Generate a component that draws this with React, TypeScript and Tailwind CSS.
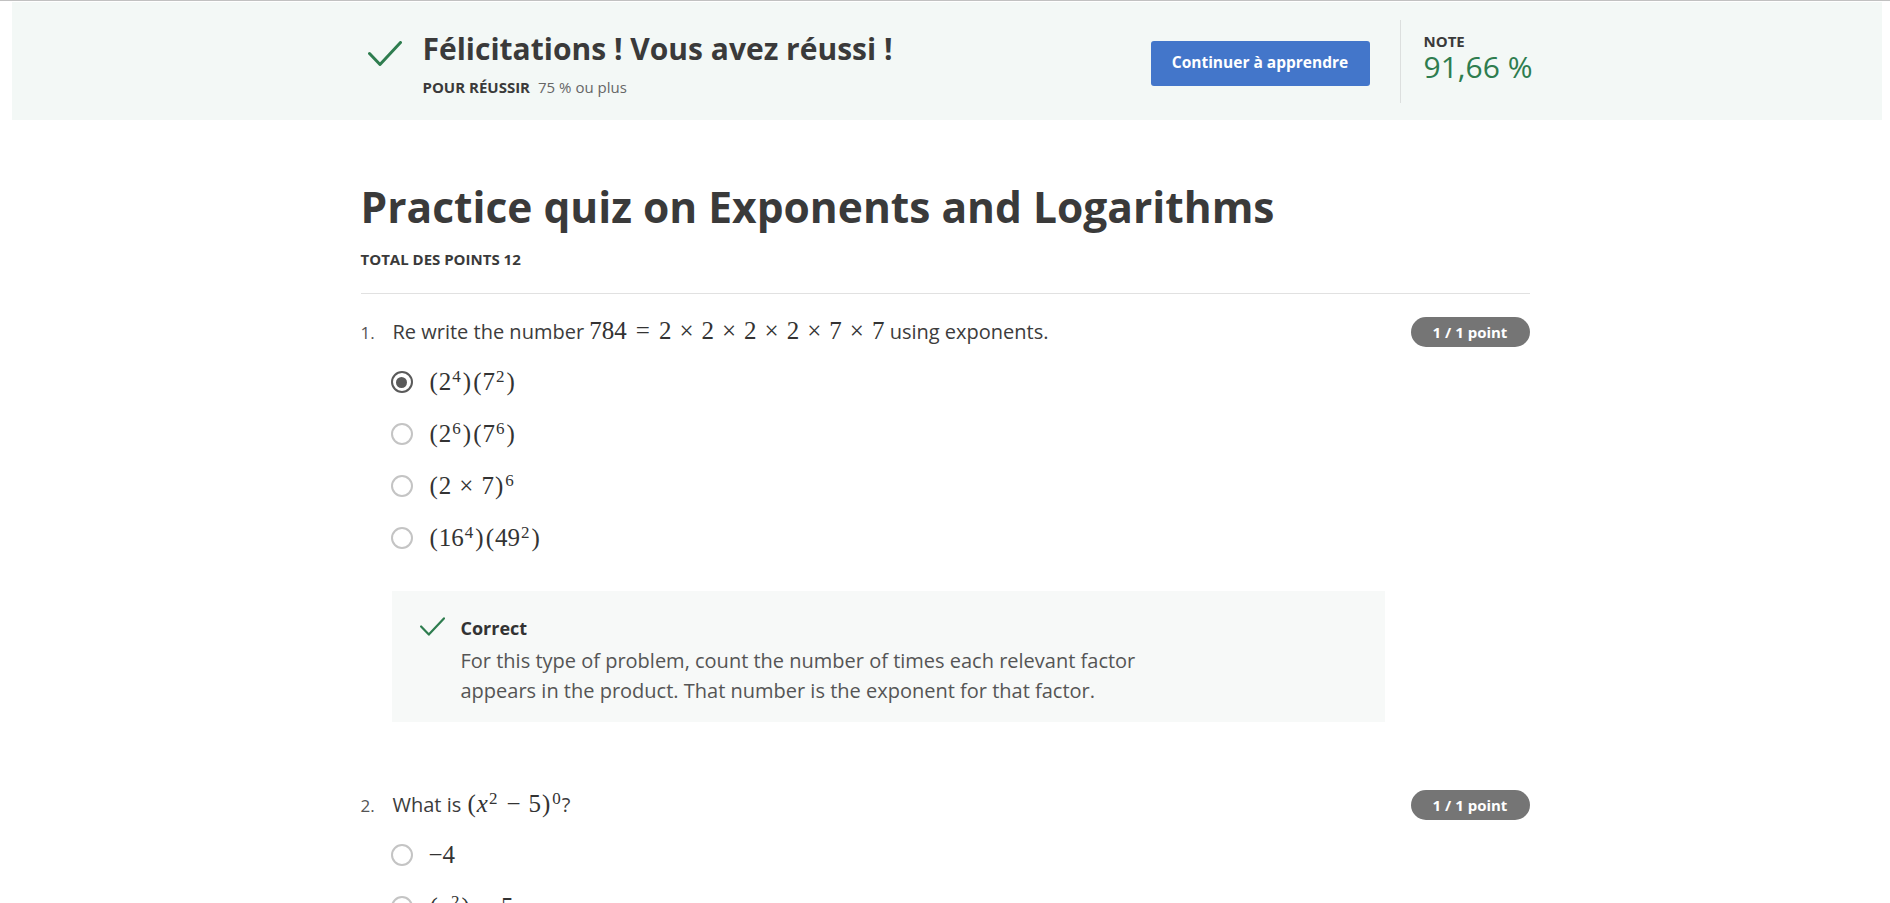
import React from 'react';

function Check({ className }: { className?: string }) {
  return (
    <svg viewBox="0 0 34 25" className={className} fill="none">
      <path d="M1.5 12.5 L12 23.5 L32.5 1.5" stroke="currentColor" strokeWidth="3" strokeLinecap="round" strokeLinejoin="round" />
    </svg>
  );
}

function Radio({ checked }: { checked?: boolean }) {
  if (checked) {
    return (
      <span className="w-[22px] h-[22px] shrink-0 rounded-full border-[2.5px] border-[#5a5a5a] flex items-center justify-center">
        <span className="w-[11px] h-[11px] rounded-full bg-[#5a5a5a]" />
      </span>
    );
  }
  return <span className="w-[22px] h-[22px] shrink-0 rounded-full border-[2.5px] border-[#c4c4c4]" />;
}

// math bits (KaTeX look-alike)
const M = ({ children }: { children: React.ReactNode }) => (
  <span className="font-['Liberation_Serif',serif] text-[25px] leading-none text-[#333] whitespace-nowrap">{children}</span>
);
const Sup = ({ children }: { children: React.ReactNode }) => (
  <span className="text-[17px] align-[8px] ml-[1px] mr-[1px]">{children}</span>
);
const P = ({ children }: { children: React.ReactNode }) => <span className="mx-[1px]">{children}</span>;
const Op = ({ children, wide }: { children: React.ReactNode; wide?: boolean }) => (
  <span className={wide ? 'mx-[9px]' : 'mx-[8px]'}>{children}</span>
);
const X = () => <span className="italic">x</span>;

interface Question {
  num: number;
  text: React.ReactNode;
  options: React.ReactNode[];
  selected: number;
  feedback?: string;
}

const QUESTIONS: Question[] = [
  {
    num: 1,
    text: (
      <>
        Re write the number{' '}
        <M>
          784<Op wide>=</Op>2<Op>×</Op>2<Op>×</Op>2<Op>×</Op>2<Op>×</Op>7<Op>×</Op>7
        </M>{' '}
        using exponents.
      </>
    ),
    options: [
      <M><P>(</P>2<Sup>4</Sup><P>)</P><P>(</P>7<Sup>2</Sup><P>)</P></M>,
      <M><P>(</P>2<Sup>6</Sup><P>)</P><P>(</P>7<Sup>6</Sup><P>)</P></M>,
      <M><P>(</P>2<Op>×</Op>7<P>)</P><Sup>6</Sup></M>,
      <M><P>(</P>16<Sup>4</Sup><P>)</P><P>(</P>49<Sup>2</Sup><P>)</P></M>,
    ],
    selected: 0,
    feedback:
      'For this type of problem, count the number of times each relevant factor appears in the product. That number is the exponent for that factor.',
  },
  {
    num: 2,
    text: (
      <>
        What is{' '}
        <M>
          <P>(</P><X /><Sup>2</Sup><Op>−</Op>5<P>)</P><Sup>0</Sup>
        </M>
        ?
      </>
    ),
    options: [
      <M>−4</M>,
      <M><P>(</P><X /><Sup>2</Sup><P>)</P><Op>−</Op>5</M>,
      <M>1</M>,
    ],
    selected: -1,
  },
];

function QuestionBlock({ q }: { q: Question }) {
  return (
    <div>
      <div className="h-[30px] flex items-center justify-between">
        <div className="flex items-baseline">
          <span className="w-[32px] text-[17px] text-[#555]">{q.num}.</span>
          <span className="text-[20px] text-[#3c3c3c]">{q.text}</span>
        </div>
        <span className="w-[119px] h-[30px] rounded-full bg-[#757575] text-white text-[15px] font-bold flex items-center justify-center">
          1 / 1 point
        </span>
      </div>

      <div className="mt-[9px]">
        {q.options.map((opt, i) => (
          <div key={i} className="h-[52px] flex items-center pl-[30px]">
            <Radio checked={i === q.selected} />
            <span className="ml-[16px]">{opt}</span>
          </div>
        ))}
      </div>

      {q.feedback && (
        <div className="mt-[27px] ml-[31px] w-[993px] bg-[#f7f9f8] pt-[24px] pb-[16px] pl-[28px] flex">
          <Check className="w-[25px] h-[19px] mt-[2px] text-[#2e7d4f] shrink-0" />
          <div className="ml-[16px]">
            <div className="text-[18px] leading-[26px] font-bold text-[#333]">Correct</div>
            <p className="mt-[5px] max-w-[700px] text-[20px] leading-[30px] text-[#555]">{q.feedback}</p>
          </div>
        </div>
      )}
    </div>
  );
}

export default function App() {
  return (
    <div className="min-h-screen bg-white font-['Open_Sans',sans-serif] text-[#3c3c3c] border-t border-[#c1c1c1]">
      {/* Result banner */}
      <div className="mt-px ml-3 mr-2 h-[118px] bg-[#f3f8f6]">
        <div className="w-[1169px] mx-auto h-full flex items-center justify-between">
          <div className="flex items-start mt-[5px]">
            <Check className="w-[34px] h-[25px] ml-[5px] mt-[10px] text-[#2e7d4f]" />
            <div className="ml-[21px]">
              <h2 className="text-[30px] leading-[36px] font-bold text-[#3a3a3a]">Félicitations ! Vous avez réussi !</h2>
              <div className="mt-[10px] text-[15px] leading-[20px]">
                <span className="font-bold text-[#3a3a3a]">POUR RÉUSSIR</span>
                <span className="ml-2 text-[#666]">75 % ou plus</span>
              </div>
            </div>
          </div>
          <div className="flex items-center">
            <button className="mt-[4px] w-[219px] h-[45px] rounded-[3px] bg-[#4376ca] text-white font-bold text-[15.5px]">
              Continuer à apprendre
            </button>
            <div className="ml-[30px] w-px h-[83px] bg-[#dcdfde]" />
            <div className="pl-[23px] w-[131px] -mt-[7px] whitespace-nowrap">
              <div className="text-[15px] leading-[18px] font-bold text-[#3a3a3a]">NOTE</div>
              <div className="text-[30px] leading-[34px] text-[#2e7d4f]">91,66 %</div>
            </div>
          </div>
        </div>
      </div>

      {/* Quiz */}
      <main className="w-[1169px] mx-auto">
        <h1 className="mt-[61px] text-[42.5px] leading-[52px] font-bold text-[#3a3a3a]">
          Practice quiz on Exponents and Logarithms
        </h1>
        <div className="mt-[16px] text-[15px] leading-[20px] font-bold text-[#3a3a3a]">TOTAL DES POINTS 12</div>
        <div className="mt-[24px] h-px bg-[#e1e1e1]" />

        <div className="mt-[23px]">
          <QuestionBlock q={QUESTIONS[0]} />
        </div>
        <div className="mt-[68px]">
          <QuestionBlock q={QUESTIONS[1]} />
        </div>
      </main>
    </div>
  );
}
